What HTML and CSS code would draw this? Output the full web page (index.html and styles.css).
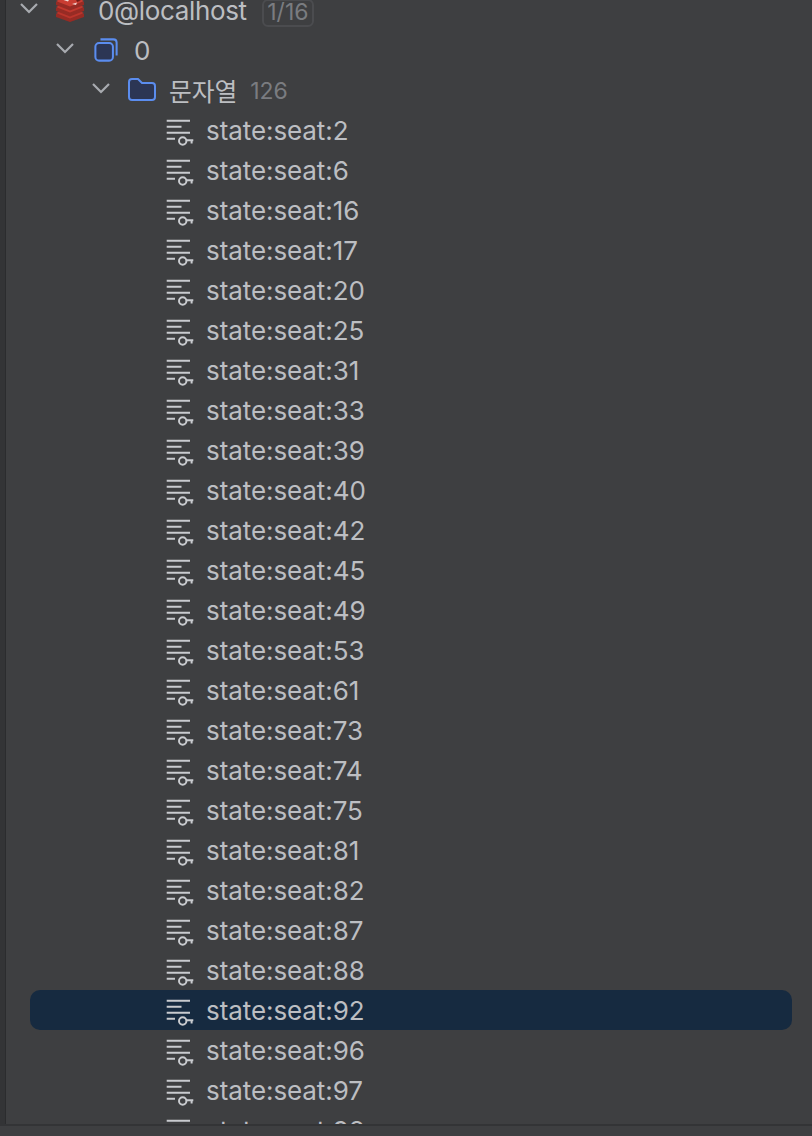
FILE: index.html
```html
<!DOCTYPE html>
<html lang="ko">
<head>
<meta charset="utf-8">
<title>Redis tree</title>
<link rel="stylesheet" href="styles.css">
</head>
<body>
<svg class="defs" width="0" height="0" aria-hidden="true">
  <defs>
    <symbol id="key" viewBox="0 0 28 40">
      <path d="M0.700 10.700H24M0.700 16.700H15.500M0.700 22.700H24M0.700 28.700H9" fill="none" stroke="#c9cbcf" stroke-width="2"/>
      <circle cx="16.700" cy="31" r="3.700" fill="none" stroke="#c9cbcf" stroke-width="2"/>
      <path d="M20.500 30.300H27.300M25.600 30.300V33.500" fill="none" stroke="#c9cbcf" stroke-width="2"/>
    </symbol>
    <symbol id="chev" viewBox="0 0 20 12">
      <path d="M2 2L10 10L18 2" fill="none" stroke="#a8abb0" stroke-width="2.200"/>
    </symbol>
  </defs>
</svg>
<div class="app">
  <div class="edge"></div>
  <div class="pane">
    <div class="tree">
      <div class="row lvl0">
        <svg class="chev"><use href="#chev"/></svg>
        <svg class="redis" viewBox="0 0 28 24">
          <path d="M0 16L14 10L28 16V19L14 24L0 19Z" fill="#972b24"/>
          <path d="M0 15L14 9L28 15L14 20.500Z" fill="#bb352c"/>
          <path d="M0 10L14 4L28 10V13L14 18.500L0 13Z" fill="#972b24"/>
          <path d="M0 9L14 3L28 9L14 14.500Z" fill="#c2382e"/>
          <path d="M0 4L14 -2L28 4V7L14 12.500L0 7Z" fill="#972b24"/>
          <path d="M0 3L14 -3L28 3L14 8.500Z" fill="#c93d32"/>
          <path d="M6 1.500L14 0L12 3.500Z" fill="#f2dcd9"/>
          <path d="M16 6L21 4.500L20 7Z" fill="#efd2ce"/>
          <path d="M20 1.500L25 2.500L21 4Z" fill="#6e1d18"/>
        </svg>
        <span class="name host">0@localhost</span>
        <span class="badge">1/16</span>
      </div>
      <div class="row lvl1">
        <svg class="chev"><use href="#chev"/></svg>
        <svg class="db" viewBox="0 0 26 26">
          <path d="M7 1.500H21Q24.500 1.500 24.500 5V19" fill="none" stroke="#5b8def" stroke-width="2.200"/>
          <rect x="1.500" y="5.500" width="19" height="19" rx="4" fill="#2c3654" stroke="#5b8def" stroke-width="2.200"/>
        </svg>
        <span class="name zero">0</span>
      </div>
      <div class="row lvl2">
        <svg class="chev"><use href="#chev"/></svg>
        <svg class="folder" viewBox="0 0 28 24">
          <path d="M1 4Q1 1 4 1H10L14 5H24Q27 5 27 8V19Q27 22 24 22H4Q1 22 1 19Z" fill="#2c3654" stroke="#5b8def" stroke-width="2"/>
        </svg>
        <span class="name group">문자열</span>
        <span class="count">126</span>
      </div>
      <div class="row item"><svg class="key"><use href="#key"/></svg><span class="name">state:seat:2</span></div>
      <div class="row item"><svg class="key"><use href="#key"/></svg><span class="name">state:seat:6</span></div>
      <div class="row item"><svg class="key"><use href="#key"/></svg><span class="name">state:seat:16</span></div>
      <div class="row item"><svg class="key"><use href="#key"/></svg><span class="name">state:seat:17</span></div>
      <div class="row item"><svg class="key"><use href="#key"/></svg><span class="name">state:seat:20</span></div>
      <div class="row item"><svg class="key"><use href="#key"/></svg><span class="name">state:seat:25</span></div>
      <div class="row item"><svg class="key"><use href="#key"/></svg><span class="name">state:seat:31</span></div>
      <div class="row item"><svg class="key"><use href="#key"/></svg><span class="name">state:seat:33</span></div>
      <div class="row item"><svg class="key"><use href="#key"/></svg><span class="name">state:seat:39</span></div>
      <div class="row item"><svg class="key"><use href="#key"/></svg><span class="name">state:seat:40</span></div>
      <div class="row item"><svg class="key"><use href="#key"/></svg><span class="name">state:seat:42</span></div>
      <div class="row item"><svg class="key"><use href="#key"/></svg><span class="name">state:seat:45</span></div>
      <div class="row item"><svg class="key"><use href="#key"/></svg><span class="name">state:seat:49</span></div>
      <div class="row item"><svg class="key"><use href="#key"/></svg><span class="name">state:seat:53</span></div>
      <div class="row item"><svg class="key"><use href="#key"/></svg><span class="name">state:seat:61</span></div>
      <div class="row item"><svg class="key"><use href="#key"/></svg><span class="name">state:seat:73</span></div>
      <div class="row item"><svg class="key"><use href="#key"/></svg><span class="name">state:seat:74</span></div>
      <div class="row item"><svg class="key"><use href="#key"/></svg><span class="name">state:seat:75</span></div>
      <div class="row item"><svg class="key"><use href="#key"/></svg><span class="name">state:seat:81</span></div>
      <div class="row item"><svg class="key"><use href="#key"/></svg><span class="name">state:seat:82</span></div>
      <div class="row item"><svg class="key"><use href="#key"/></svg><span class="name">state:seat:87</span></div>
      <div class="row item"><svg class="key"><use href="#key"/></svg><span class="name">state:seat:88</span></div>
      <div class="row item selected"><svg class="key"><use href="#key"/></svg><span class="name">state:seat:92</span></div>
      <div class="row item"><svg class="key"><use href="#key"/></svg><span class="name">state:seat:96</span></div>
      <div class="row item"><svg class="key"><use href="#key"/></svg><span class="name">state:seat:97</span></div>
      <div class="row item"><svg class="key"><use href="#key"/></svg><span class="name">state:seat:98</span></div>
    </div>
  </div>
</div>
<div class="footer"></div>
</body>
</html>
```

FILE: styles.css
```css
* { box-sizing: border-box; }
html, body { margin: 0; height: 100%; overflow: hidden; }
body {
  background: #3e3f41;
  font-family: Inter, "Noto Sans CJK KR", sans-serif;
  font-size: 26px;
  color: #bcbec2;
  display: flex;
  flex-direction: column;
}
.defs { display: block; height: 0; }
.app { height: 1124px; display: flex; overflow: hidden; flex: none; }
.edge { width: 6px; flex: none; background: #333436; border-right: 1px solid #2b2c2e; }
.pane { flex: 1; overflow: hidden; min-width: 0; }
.tree { margin-top: -10px; }
.row {
  height: 40px;
  display: flex;
  align-items: center;
  margin-right: 20px;
  white-space: nowrap;
}
.name { letter-spacing: -0.08px; }
.lvl0 { padding-left: 13px; }
.lvl1 { padding-left: 49px; }
.lvl2 { padding-left: 85px; }
.item { padding-left: 160px; }
.selected {
  margin-left: 24px;
  padding-left: 136px;
  border-radius: 10px;
  background: #162a40;
}
.chev { width: 20px; height: 12px; flex: none; margin-bottom: 4px; }
.redis { width: 28px; height: 24px; flex: none; margin: 0 14px 0 17px; overflow: visible; }
.db { width: 24px; height: 24px; flex: none; margin: 0 16px 0 19px; }
.folder { width: 28px; height: 24px; flex: none; margin: 0 13px 0 17px; }
.key { width: 28px; height: 40px; flex: none; margin-right: 12px; }
.host { letter-spacing: -0.35px; }
.group { font-size: 24.800px; }
.badge {
  margin: 6px 0 0 15px;
  border: 2px solid #4b4c4f;
  border-radius: 6px;
  font-size: 23px;
  height: 28px;
  line-height: 23px;
  padding: 0 3.500px;
  color: #7a7c80;
}
.count { margin: 2px 0 0 13px; font-size: 23px; color: #7a7c80; }
.footer { flex: 1; border-top: 2px solid #333436; background: #3e3f41; }
```
